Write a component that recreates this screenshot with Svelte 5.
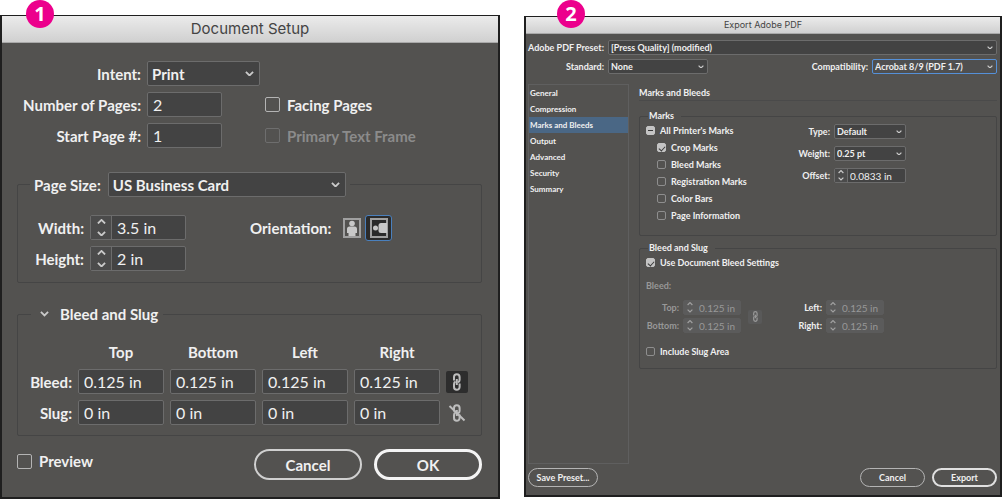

<script lang="ts">
	const sections = [
		'General',
		'Compression',
		'Marks and Bleeds',
		'Output',
		'Advanced',
		'Security',
		'Summary'
	];
	const sides = ['Top', 'Bottom', 'Left', 'Right'];

	let section = $state('Marks and Bleeds');
	let orientation = $state('landscape');
	let bleed = $state(['0.125 in', '0.125 in', '0.125 in', '0.125 in']);
	let slug = $state(['0 in', '0 in', '0 in', '0 in']);
	let marks = $state([
		{ name: 'Crop Marks', on: true },
		{ name: 'Bleed Marks', on: false },
		{ name: 'Registration Marks', on: false },
		{ name: 'Color Bars', on: false },
		{ name: 'Page Information', on: false }
	]);

	let allMarks = $derived(marks.every((m) => m.on));
	let someMarks = $derived(!allMarks && marks.some((m) => m.on));

	function toggleAll() {
		const next = !allMarks;
		for (const m of marks) m.on = next;
	}
</script>

{#snippet chevron(up = false)}
	<svg class="chevron" viewBox="0 0 10 6" aria-hidden="true">
		<path d={up ? 'M1 5l4-4 4 4' : 'M1 1l4 4 4-4'} />
	</svg>
{/snippet}

{#snippet dropdown(id: string, value: string, kind = '')}
	<span class="select {kind}">
		<select {id}><option>{value}</option></select>
		{@render chevron()}
	</span>
{/snippet}

{#snippet stepper(id: string, value: string, disabled = false)}
	<span class="stepper" class:disabled>
		<span class="arrows">
			<button aria-label="Increase" {disabled}>{@render chevron(true)}</button>
			<button aria-label="Decrease" {disabled}>{@render chevron()}</button>
		</span>
		<input {id} type="text" {value} {disabled} />
	</span>
{/snippet}

{#snippet chain(broken = false)}
	<svg class="chain" viewBox="0 0 18 18" aria-hidden="true">
		<path d="M6 7.500V4a2.800 2.800 0 0 1 5.600 0v3q0 1.800-1.600 2.200" />
		<path d="M11.600 10.500V14a2.800 2.800 0 0 1-5.600 0v-3q0-1.800 1.600-2.200" />
		<path d="M8.800 6v6" />
		{#if broken}<path d="M1.500 2l15 14.500" />{/if}
	</svg>
{/snippet}

<main class="page">
	<section class="dialog" aria-labelledby="setup-title">
		<span class="badge">1</span>
		<h2 class="titlebar" id="setup-title">Document Setup</h2>
		<div class="body">
			<div class="general">
				<label for="intent">Intent:</label>
				{@render dropdown('intent', 'Print', 'intent')}
				<label for="pages">Number of Pages:</label>
				<input id="pages" class="field short" type="text" value="2" />
				<label class="check"><input type="checkbox" />Facing Pages</label>
				<label for="start">Start Page #:</label>
				<input id="start" class="field short" type="text" value="1" />
				<label class="check off">
					<input type="checkbox" disabled />Primary Text Frame
				</label>
			</div>

			<fieldset class="size">
				<legend>
					<label for="size">Page Size:</label>
					{@render dropdown('size', 'US Business Card', 'wide')}
				</legend>
				<div class="dimensions">
					<label for="width">Width:</label>
					{@render stepper('width', '3.5 in')}
					<label for="height">Height:</label>
					{@render stepper('height', '2 in')}
				</div>
				<div class="orientation">
					<span>Orientation:</span>
					<button
						class="orient"
						class:active={orientation === 'portrait'}
						aria-label="Portrait"
						onclick={() => (orientation = 'portrait')}
					>
						<svg viewBox="0 0 18 20" width="18" height="20">
							<rect class="sheet" x="1" y="1" width="16" height="18" />
							<circle cx="9" cy="5.500" r="2.800" />
							<path d="M4 11q0-2.500 2.500-2.500h5q2.500 0 2.500 2.500v4h-1.500v3h-7v-3H4z" />
						</svg>
					</button>
					<button
						class="orient"
						class:active={orientation === 'landscape'}
						aria-label="Landscape"
						onclick={() => (orientation = 'landscape')}
					>
						<svg viewBox="0 0 18 20" width="18" height="20">
							<rect class="sheet" x="1" y="1" width="16" height="18" />
							<circle cx="5.500" cy="10" r="2.500" />
							<path d="M17 5h-6q-2.500 0-2.500 2.500v5q0 2.500 2.500 2.500h6z" />
						</svg>
					</button>
				</div>
			</fieldset>

			<fieldset class="bleeds">
				<legend>
					<button class="fold" aria-label="Collapse">{@render chevron()}</button>
					Bleed and Slug
				</legend>
				<div class="sides">
					<span></span>
					{#each sides as side}
						<span class="side">{side}</span>
					{/each}
					<span></span>
					<span class="row-label">Bleed:</span>
					{#each sides as side, i}
						<input
							class="field"
							type="text"
							aria-label="Bleed {side}"
							bind:value={bleed[i]}
						/>
					{/each}
					<button class="link active" aria-label="Link bleed">
						{@render chain()}
					</button>
					<span class="row-label">Slug:</span>
					{#each sides as side, i}
						<input
							class="field"
							type="text"
							aria-label="Slug {side}"
							bind:value={slug[i]}
						/>
					{/each}
					<button class="link" aria-label="Link slug">
						{@render chain(true)}
					</button>
				</div>
			</fieldset>

			<footer>
				<label class="check"><input type="checkbox" />Preview</label>
				<button class="btn">Cancel</button>
				<button class="btn primary">OK</button>
			</footer>
		</div>
	</section>

	<section class="dialog compact" aria-labelledby="export-title">
		<span class="badge">2</span>
		<h2 class="titlebar" id="export-title">Export Adobe PDF</h2>
		<div class="body">
			<div class="presets">
				<label for="preset">Adobe PDF Preset:</label>
				{@render dropdown('preset', '[Press Quality] (modified)', 'full')}
				<label for="standard">Standard:</label>
				{@render dropdown('standard', 'None')}
				<label for="compat">Compatibility:</label>
				{@render dropdown('compat', 'Acrobat 8/9 (PDF 1.7)', 'focused')}
			</div>

			<div class="columns">
				<nav>
					{#each sections as name}
						<button
							class:current={section === name}
							onclick={() => (section = name)}>{name}</button
						>
					{/each}
				</nav>
				<div class="pane">
					<h3>Marks and Bleeds</h3>
					<fieldset class="marks">
						<legend>Marks</legend>
						<div class="mark-list">
							<label class="check">
								<input
									type="checkbox"
									checked={allMarks}
									indeterminate={someMarks}
									onchange={toggleAll}
								/>All Printer's Marks
							</label>
							{#each marks as mark}
								<label class="check nested">
									<input type="checkbox" bind:checked={mark.on} />{mark.name}
								</label>
							{/each}
						</div>
						<div class="mark-options">
							<label for="type">Type:</label>
							{@render dropdown('type', 'Default')}
							<label for="weight">Weight:</label>
							{@render dropdown('weight', '0.25 pt')}
							<label for="offset">Offset:</label>
							{@render stepper('offset', '0.0833 in')}
						</div>
					</fieldset>

					<fieldset class="document-bleed">
						<legend>Bleed and Slug</legend>
						<label class="check">
							<input type="checkbox" checked />Use Document Bleed Settings
						</label>
						<p class="off">Bleed:</p>
						<div class="bleed-values">
							<div class="pair off">
								<label for="top">Top:</label>
								{@render stepper('top', '0.125 in', true)}
								<label for="bottom">Bottom:</label>
								{@render stepper('bottom', '0.125 in', true)}
							</div>
							<button class="link" aria-label="Link values" disabled>
								{@render chain()}
							</button>
							<div class="pair">
								<label for="left">Left:</label>
								{@render stepper('left', '0.125 in', true)}
								<label for="right">Right:</label>
								{@render stepper('right', '0.125 in', true)}
							</div>
						</div>
						<label class="check">
							<input type="checkbox" />Include Slug Area
						</label>
					</fieldset>
				</div>
			</div>

			<footer>
				<button class="btn save">Save Preset...</button>
				<button class="btn">Cancel</button>
				<button class="btn primary">Export</button>
			</footer>
		</div>
	</section>
</main>

<style>
	:global(body) {
		margin: 0;
		background: #fff;
	}
	.page {
		display: grid;
		grid-template-columns: 500fr 478fr;
		gap: 24px;
		align-items: start;
		padding-top: 15px;
	}
	.page * {
		box-sizing: border-box;
	}

	.dialog {
		--text: 15px;
		--value: 16px;
		--control: 25px;
		--box: 15px;
		--pad: 4px;
		--chevron: 9px;
		--arrows: 21px;
		--off: #8b8b8b;
		position: relative;
		border: 2px solid #1f1f1f;
		border-top-width: 1px;
		background: #535250;
		color: #f0f0f0;
		font: 700 var(--text) Lato, sans-serif;
	}
	.compact {
		--text: 9px;
		--value: 10px;
		--control: 15px;
		--box: 9px;
		--pad: 2px;
		--chevron: 6px;
		--arrows: 13px;
		--off: #989898;
		margin-top: 1px;
	}
	.badge {
		position: absolute;
		top: -16px;
		left: 24px;
		width: 28px;
		height: 28px;
		border-radius: 50%;
		background: #ec008c;
		color: #fff;
		font: 700 20px/28px 'Open Sans', sans-serif;
		text-align: center;
	}
	.compact .badge {
		top: -17px;
		left: 31px;
	}
	.titlebar {
		margin: 0;
		border-bottom: 1px solid #a9a9a9;
		background: linear-gradient(#ebebeb, #d0d0d0);
		color: #444;
		font: 400 15px/26px Inter, sans-serif;
		text-align: center;
	}
	.compact .titlebar {
		font-size: 9px;
		line-height: 16px;
	}
	.body {
		padding: 18px 16px 17px 15px;
	}
	.compact .body {
		padding: 6px 3px 8px 2px;
	}

	button,
	input,
	select {
		margin: 0;
		padding: 0;
		border: 0;
		background: none;
		color: inherit;
		font: inherit;
	}
	svg {
		display: block;
	}
	.off {
		color: var(--off);
	}

	.chevron {
		width: var(--chevron);
		fill: none;
		stroke: #cacaca;
		stroke-width: 2;
	}
	.field,
	.select,
	.stepper {
		height: var(--control);
		border: 1px solid #6c6c6c;
		border-radius: 2px;
		background: #434343;
	}
	.field {
		width: 100%;
		min-width: 0;
		padding-left: 5px;
		font-size: var(--value);
		font-weight: 400;
	}
	.field.short {
		width: 75px;
	}
	.select {
		display: grid;
		align-items: center;
	}
	.select select,
	.select .chevron {
		grid-area: 1 / 1;
	}
	.select select {
		width: 100%;
		height: 100%;
		padding-left: var(--pad);
		appearance: none;
	}
	.select .chevron {
		justify-self: end;
		margin-right: 5px;
		pointer-events: none;
	}
	.compact .select .chevron {
		margin-right: 3px;
	}
	.select.intent {
		width: 113px;
	}
	.select.wide {
		width: 238px;
	}
	.select.full {
		grid-column: 2 / -1;
	}
	.select.focused {
		border-color: #5590d8;
		background: #4f4f4f;
	}
	.stepper {
		display: flex;
		width: 96px;
	}
	.stepper input {
		flex: 1;
		min-width: 0;
		padding-left: 5px;
		font-size: var(--value);
		font-weight: 400;
	}
	.compact .stepper input {
		padding-left: 2px;
	}
	.arrows {
		display: grid;
		align-content: space-around;
		justify-items: center;
		width: var(--arrows);
		border-right: 1px solid #6c6c6c;
		background: #4b4b4b;
	}
	.stepper.disabled {
		border-color: #5b5b5b;
		background: #5b5b5b;
		color: var(--off);
	}
	.disabled .arrows {
		border-color: #5b5b5b;
		background: none;
	}
	.disabled .chevron {
		stroke: #a0a0a0;
	}

	.check {
		display: flex;
		align-items: center;
		gap: 7px;
	}
	.compact .check {
		gap: 5px;
	}
	.check input {
		display: grid;
		place-items: center;
		width: var(--box);
		height: var(--box);
		border: 1px solid #b4b4b4;
		border-radius: 2px;
		appearance: none;
	}
	.compact .check input {
		border-color: #8e8e8e;
	}
	.check input:disabled {
		border-color: #6e6e6e;
	}
	.compact .check input:checked,
	.compact .check input:indeterminate {
		border-color: #c4c4c4;
		background: #c4c4c4;
	}
	.check input:checked::after {
		width: 5px;
		height: 3px;
		border: solid #383838;
		border-width: 0 0 1px 1px;
		content: '';
		transform: rotate(-48deg);
	}
	.check input:indeterminate::after {
		width: 5px;
		height: 1px;
		background: #383838;
		content: '';
	}

	fieldset {
		min-width: 0;
		margin: 0;
		border: 1px solid #454545;
		border-radius: 2px;
	}
	legend {
		display: flex;
		align-items: center;
	}

	.general {
		display: grid;
		grid-template-columns: 124px 113px 1fr;
		gap: 6px;
		align-items: center;
	}
	.general > label:not(.check) {
		grid-column: 1;
		text-align: right;
	}
	.general .check {
		margin-left: -1px;
	}

	.size {
		display: flex;
		gap: 64px;
		align-items: start;
		margin-top: 24px;
		padding: 18px 16px 11px;
	}
	.size legend {
		gap: 7px;
		margin-left: -4px;
		padding: 0 4px;
	}
	.dimensions {
		display: grid;
		grid-template-columns: 50px 96px;
		gap: 6px;
		align-items: center;
		text-align: right;
	}
	.orientation {
		display: flex;
		gap: 4px;
		align-items: center;
	}
	.orientation span {
		margin-right: 8px;
	}
	.orient {
		display: grid;
		place-items: center;
		height: 26px;
		border-radius: 3px;
		color: #c8c8c8;
	}
	.orient.active {
		width: 27px;
		border: 1px solid #4a80bd;
		background: #2b2b2b;
	}
	.orient svg {
		fill: currentColor;
	}
	.orient .sheet {
		fill: none;
		stroke: #a0a0a0;
		stroke-width: 2;
	}

	.bleeds {
		margin-top: 21px;
		padding: 19px 6px 10px;
	}
	.bleeds legend {
		gap: 11px;
		height: 20px;
		margin-left: 7px;
		padding: 0 5px 0 9px;
	}
	.sides {
		display: grid;
		grid-template-columns: 48px repeat(4, minmax(0, 86px)) 22px;
		gap: 6px;
		align-items: center;
	}
	.side {
		margin-bottom: 2px;
		line-height: 18px;
		text-align: center;
	}
	.row-label {
		text-align: right;
	}
	.link {
		display: grid;
		place-items: center;
		width: 22px;
		height: 22px;
		border-radius: 2px;
	}
	.link.active {
		background: #2d2d2d;
	}
	.chain {
		width: 18px;
		height: 18px;
		fill: none;
		stroke: #bdbdbd;
		stroke-width: 2;
	}

	footer {
		display: flex;
		gap: 12px;
		align-items: center;
		margin-top: 13px;
	}
	footer > :first-child {
		margin-right: auto;
	}
	footer .check {
		align-self: start;
		height: 24px;
	}
	.btn {
		width: 108px;
		height: 31px;
		border: 2px solid #d0d0d0;
		border-radius: 16px;
	}
	.btn.primary {
		border: 3px solid #f4f4f4;
	}

	.compact footer {
		gap: 7px;
		margin-top: 4px;
	}
	.compact .btn {
		width: 65px;
		height: 19px;
		border: 1px solid #b4b4b4;
	}
	.compact .btn.save {
		width: 70px;
	}
	.compact .btn.primary {
		border: 2px solid #e0e0e0;
	}

	.presets {
		display: grid;
		grid-template-columns: 76px 100px 1fr 125px;
		gap: 4px;
		align-items: center;
	}
	.presets label {
		text-align: right;
		white-space: nowrap;
	}
	.columns {
		display: grid;
		grid-template-columns: 101px 1fr;
		gap: 10px;
		margin-top: 10px;
	}
	nav {
		display: flex;
		flex-direction: column;
		min-height: 380px;
		border: 1px solid #5f5f5f;
	}
	nav button {
		height: 16px;
		padding-left: 1px;
		font-size: 8px;
		text-align: left;
	}
	nav .current {
		background: #4a6785;
	}
	.pane h3 {
		margin: 0;
		padding-top: 1px;
		border-bottom: 1px solid #4a4a4a;
		font-size: inherit;
		line-height: 15px;
	}

	.pane legend {
		margin-left: 2px;
		padding: 0 7px 0 1px;
		line-height: 12px;
	}
	.marks {
		display: grid;
		grid-template-columns: 140px 1fr;
		align-items: start;
		margin-top: 9px;
		padding: 0 6px 11px;
	}
	.mark-list .check {
		height: 17px;
	}
	.nested {
		margin-left: 11px;
	}
	.mark-options {
		display: grid;
		grid-template-columns: 44px 72px;
		gap: 7px 4px;
		align-items: center;
		padding-top: 2px;
		text-align: right;
	}
	.mark-options .stepper {
		width: 100%;
	}
	.document-bleed {
		margin-top: 6px;
		padding: 3px 6px 11px;
	}
	.document-bleed p {
		margin: 11px 0 7px;
		line-height: 14px;
	}
	.bleed-values {
		display: flex;
		align-items: center;
		margin-bottom: 13px;
	}
	.pair {
		display: grid;
		grid-template-columns: 33px 58px;
		gap: 3px 4px;
		align-items: center;
		text-align: right;
	}
	.pair .stepper {
		width: 100%;
	}
	.compact .link {
		width: 14px;
		height: 14px;
		margin: 0 27px 0 7px;
		background: #595959;
	}
	.compact .chain {
		width: 11px;
		height: 11px;
		stroke: #999;
	}
</style>
